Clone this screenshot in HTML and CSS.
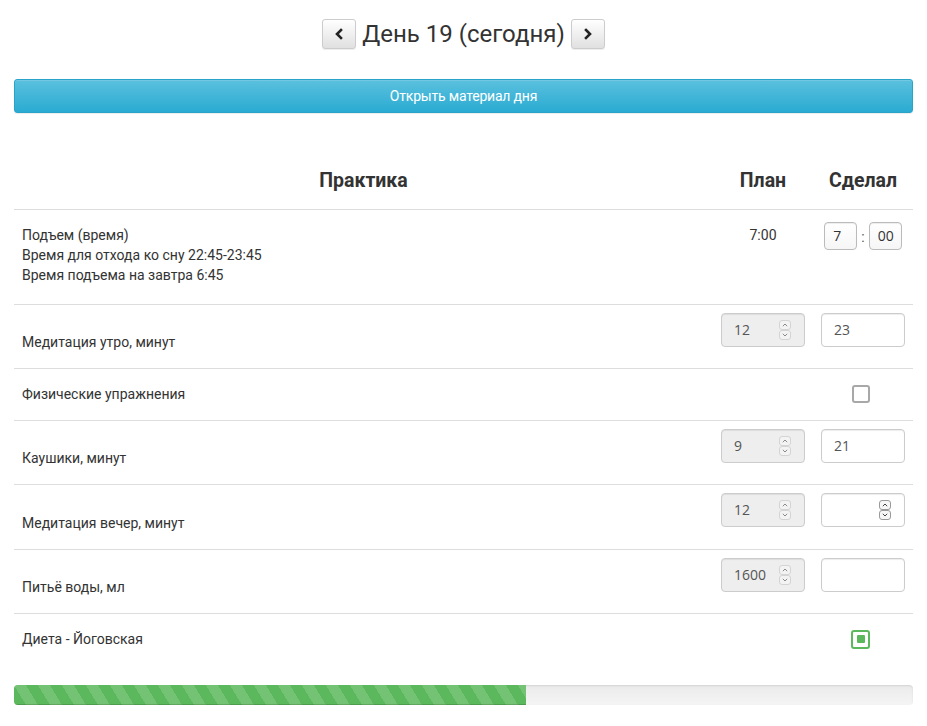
FILE: index.html
```html
<!DOCTYPE html>
<html lang="ru">
<head>
<meta charset="utf-8">
<title>День 19</title>
<link rel="stylesheet" href="styles.css">
</head>
<body>
<div class="page">
  <div class="day-nav">
    <button class="nav-btn" type="button" aria-label="Назад">
      <svg width="10" height="12" viewBox="0 0 10 12"><path d="M7 2 L3 6 L7 10" fill="none" stroke="#222" stroke-width="2.6" stroke-linecap="square" stroke-linejoin="miter"/></svg>
    </button>
    <h1 class="day-title">День 19 (сегодня)</h1>
    <button class="nav-btn" type="button" aria-label="Вперёд">
      <svg width="10" height="12" viewBox="0 0 10 12"><path d="M3 2 L7 6 L3 10" fill="none" stroke="#222" stroke-width="2.6" stroke-linecap="square" stroke-linejoin="miter"/></svg>
    </button>
  </div>

  <button class="btn-info" type="button">Открыть материал дня</button>

  <div class="table">
    <div class="row head">
      <div class="cell">Практика</div>
      <div class="cell">План</div>
      <div class="cell">Сделал</div>
    </div>

    <div class="row row-time">
      <div class="cell label">Подъем (время)<br>Время для отхода ко сну 22:45-23:45<br>Время подъема на завтра 6:45</div>
      <div class="cell plan-text">7:00</div>
      <div class="cell time-done">
        <span class="time-box">7</span><span class="colon">:</span><span class="time-box">00</span>
      </div>
    </div>

    <div class="row row-num">
      <div class="cell label">Медитация утро, минут</div>
      <div class="cell"><div class="field disabled"><span class="val">12</span><span class="spin"><span class="sb"><svg width="6" height="4" viewBox="0 0 6 4"><path d="M0.8 3.2 L3 1 L5.2 3.2" fill="none" stroke="#8a8a8a" stroke-width="1"/></svg></span><span class="sb"><svg width="6" height="4" viewBox="0 0 6 4"><path d="M0.8 0.8 L3 3 L5.2 0.8" fill="none" stroke="#8a8a8a" stroke-width="1"/></svg></span></span></div></div>
      <div class="cell"><div class="field"><span class="val">23</span></div></div>
    </div>

    <div class="row row-check">
      <div class="cell label">Физические упражнения</div>
      <div class="cell"></div>
      <div class="cell check-cell"><span class="checkbox"></span></div>
    </div>

    <div class="row row-num">
      <div class="cell label">Каушики, минут</div>
      <div class="cell"><div class="field disabled"><span class="val">9</span><span class="spin"><span class="sb"><svg width="6" height="4" viewBox="0 0 6 4"><path d="M0.8 3.2 L3 1 L5.2 3.2" fill="none" stroke="#8a8a8a" stroke-width="1"/></svg></span><span class="sb"><svg width="6" height="4" viewBox="0 0 6 4"><path d="M0.8 0.8 L3 3 L5.2 0.8" fill="none" stroke="#8a8a8a" stroke-width="1"/></svg></span></span></div></div>
      <div class="cell"><div class="field"><span class="val">21</span></div></div>
    </div>

    <div class="row row-num tall">
      <div class="cell label">Медитация вечер, минут</div>
      <div class="cell"><div class="field disabled"><span class="val">12</span><span class="spin"><span class="sb"><svg width="6" height="4" viewBox="0 0 6 4"><path d="M0.8 3.2 L3 1 L5.2 3.2" fill="none" stroke="#8a8a8a" stroke-width="1"/></svg></span><span class="sb"><svg width="6" height="4" viewBox="0 0 6 4"><path d="M0.8 0.8 L3 3 L5.2 0.8" fill="none" stroke="#8a8a8a" stroke-width="1"/></svg></span></span></div></div>
      <div class="cell"><div class="field"><span class="val"></span><span class="spin dark"><span class="sb"><svg width="6" height="4" viewBox="0 0 6 4"><path d="M0.8 3.2 L3 1 L5.2 3.2" fill="none" stroke="#444" stroke-width="1"/></svg></span><span class="sb"><svg width="6" height="4" viewBox="0 0 6 4"><path d="M0.8 0.8 L3 3 L5.2 0.8" fill="none" stroke="#444" stroke-width="1"/></svg></span></span></div></div>
    </div>

    <div class="row row-num">
      <div class="cell label">Питьё воды, мл</div>
      <div class="cell"><div class="field disabled"><span class="val">1600</span><span class="spin"><span class="sb"><svg width="6" height="4" viewBox="0 0 6 4"><path d="M0.8 3.2 L3 1 L5.2 3.2" fill="none" stroke="#8a8a8a" stroke-width="1"/></svg></span><span class="sb"><svg width="6" height="4" viewBox="0 0 6 4"><path d="M0.8 0.8 L3 3 L5.2 0.8" fill="none" stroke="#8a8a8a" stroke-width="1"/></svg></span></span></div></div>
      <div class="cell"><div class="field"><span class="val"></span></div></div>
    </div>

    <div class="row row-check last">
      <div class="cell label">Диета - Йоговская</div>
      <div class="cell"></div>
      <div class="cell check-cell"><span class="checkbox checked"></span></div>
    </div>
  </div>

  <div class="progress"><div class="progress-bar" style="width:57%"></div></div>
</div>
</body>
</html>
```

FILE: styles.css
```css
* { box-sizing: border-box; }

body {
  margin: 0;
  font-family: Roboto, "Liberation Sans", sans-serif;
  font-size: 14px;
  line-height: 20px;
  color: #333;
  background: #fff;
}

.page {
  padding: 0 14px;
}

/* day navigation */
.day-nav {
  display: flex;
  justify-content: center;
  align-items: center;
  gap: 6px;
  margin-top: 19px;
  height: 30px;
}

.day-title {
  margin: 0;
  font-size: 24px;
  font-weight: 400;
  line-height: 30px;
  color: #333;
}

.nav-btn {
  width: 34px;
  height: 30px;
  padding: 0;
  display: flex;
  align-items: center;
  justify-content: center;
  border: 1px solid #ccc;
  border-radius: 3px;
  background: linear-gradient(to bottom, #fff 0%, #e0e0e0 100%);
  box-shadow: inset 0 1px 0 rgba(255,255,255,.15), 0 1px 1px rgba(0,0,0,.075);
}

/* blue button */
.btn-info {
  display: block;
  width: 100%;
  height: 34px;
  margin-top: 30px;
  padding: 0;
  border: 1px solid #28a4c9;
  border-radius: 3px;
  background: linear-gradient(to bottom, #5bc0de 0%, #2aabd2 100%);
  color: #fff;
  font-family: Roboto, "Liberation Sans", sans-serif;
  font-size: 14px;
  letter-spacing: -0.2px;
  line-height: 32px;
  text-align: center;
  box-shadow: inset 0 1px 0 rgba(255,255,255,.15), 0 1px 1px rgba(0,0,0,.075);
}

/* table */
.table {
  margin-top: 50px;
}

.row {
  display: grid;
  grid-template-columns: 1fr 100px 100px;
  border-top: 1px solid #ddd;
}

.row.head {
  border-top: 0;
  border-bottom: 1px solid #ddd;
}

.row.head + .row { border-top: 0; }

.head .cell {
  padding: 8px 8px 18px;
  font-size: 19.5px;
  font-weight: 700;
  line-height: 20px;
  text-align: center;
  color: #333;
}

.cell {
  padding: 0 8px;
}

.row-time .cell {
  padding-top: 15px;
  padding-bottom: 19px;
}

.plan-text {
  text-align: center;
}

.time-done {
  display: flex;
  justify-content: center;
  align-items: flex-start;
  gap: 4px;
}

.time-box {
  width: 33px;
  height: 28px;
  margin-top: -3px;
  padding-left: 8px;
  border: 1px solid #bbb;
  border-radius: 4px;
  background: linear-gradient(to bottom, #fff 0%, #f6f6f6 100%);
  box-shadow: inset 0 1px 1px rgba(0,0,0,.075);
  font-family: "Open Sans", "Liberation Sans", sans-serif;
  font-size: 14px;
  line-height: 26px;
  color: #333;
}

.colon {
  line-height: 24px;
  color: #555;
}

.row-num .cell {
  padding-top: 8px;
  padding-bottom: 21px;
}

.row-num.tall .cell {
  padding-bottom: 22px;
}

.row-num .cell.label {
  align-self: end;
  padding-bottom: 16px;
}

.field {
  display: flex;
  align-items: center;
  width: 84px;
  height: 34px;
  padding: 0 13px 0 12px;
  border: 1px solid #ccc;
  border-radius: 4px;
  background: #fff;
  box-shadow: inset 0 1px 1px rgba(0,0,0,.075);
  font-family: "Open Sans", "Liberation Sans", sans-serif;
  font-size: 14px;
  color: #555;
}

.field.disabled {
  background: #eee;
}

.val { flex: 1; }

.spin {
  display: flex;
  flex-direction: column;
  width: 12px;
}

.sb {
  display: flex;
  align-items: center;
  justify-content: center;
  width: 12px;
  height: 10px;
  border: 1px solid #d4d4d4;
  border-radius: 3px;
  background: #f3f3f3;
}

.sb svg { display: block; }

.spin.dark .sb {
  border-color: #9a9a9a;
  background: #f7f7f7;
}

.row-check .cell {
  padding-top: 15px;
  padding-bottom: 16px;
}

.check-cell {
  display: flex;
  justify-content: center;
  align-items: center;
  padding-right: 13px !important;
}

.checkbox {
  display: block;
  width: 18px;
  height: 18px;
  border: 2px solid #a8a8a8;
  border-radius: 3px;
  background: #fff;
}

.checkbox.checked {
  width: 19px;
  height: 19px;
  border-color: #5cb85c;
  display: flex;
  align-items: center;
  justify-content: center;
}

.checkbox.checked::after {
  content: "";
  width: 8px;
  height: 8px;
  border-radius: 1px;
  background: #5cb85c;
}

/* progress */
.progress {
  height: 20px;
  margin-top: 20px;
  border-radius: 4px;
  overflow: hidden;
  background: linear-gradient(to bottom, #ebebeb 0%, #f5f5f5 100%);
  box-shadow: inset 0 1px 2px rgba(0,0,0,.1);
}

.progress-bar {
  height: 100%;
  background-color: #5cb85c;
  background-image: linear-gradient(to top right,
      rgba(255,255,255,.15) 25%, transparent 25%, transparent 50%,
      rgba(255,255,255,.15) 50%, rgba(255,255,255,.15) 75%, transparent 75%, transparent);
  background-size: 24px 40px;
  box-shadow: inset 0 -1px 0 rgba(0,0,0,.15);
}
```
